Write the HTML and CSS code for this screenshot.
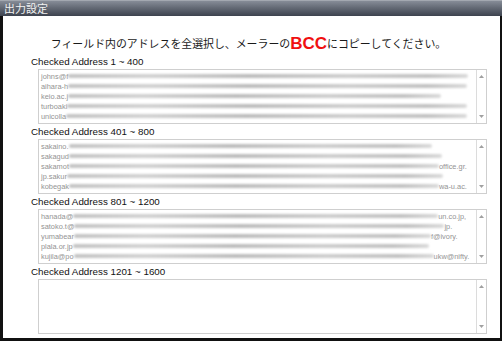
FILE: index.html
```html
<!DOCTYPE html>
<html lang="ja">
<head>
<meta charset="utf-8">
<title>出力設定</title>
<link rel="stylesheet" href="styles.css">
</head>
<body>
<div class="window">
  <div class="titlebar">出力設定</div>
  <div class="content">
    <p class="heading">フィールド内のアドレスを全選択し、メーラーの<span class="bcc">BCC</span>にコピーしてください。</p>

    <div class="block">
      <div class="label">Checked Address 1 ~ 400</div>
      <div class="box">
        <div class="lines">
          <div class="line"><span class="t">johns@f</span><span class="bar" style="width:400px"></span></div>
          <div class="line"><span class="t">aihara-h</span><span class="bar" style="width:399px"></span></div>
          <div class="line"><span class="t">keio.ac.j</span><span class="bar" style="width:373px"></span></div>
          <div class="line"><span class="t">turboaki</span><span class="bar" style="width:400px"></span></div>
          <div class="line"><span class="t">unicolla</span><span class="bar" style="width:401px"></span></div>
        </div>
        <div class="scroll">
          <svg class="arr" viewBox="0 0 5 3" width="5" height="3"><polygon points="0,3 2.5,0 5,3" fill="#a0a0a0"/></svg>
          <svg class="arr" viewBox="0 0 5 3" width="5" height="3"><polygon points="0,0 2.5,3 5,0" fill="#a0a0a0"/></svg>
        </div>
      </div>
    </div>

    <div class="block">
      <div class="label">Checked Address 401 ~ 800</div>
      <div class="box">
        <div class="lines">
          <div class="line"><span class="t">sakaino.</span><span class="bar" style="width:363px"></span></div>
          <div class="line"><span class="t">sakagud</span><span class="bar" style="width:373px"></span></div>
          <div class="line"><span class="t">sakamot</span><span class="bar" style="width:370px"></span><span class="t">office.gr.</span></div>
          <div class="line"><span class="t">jp.sakur</span><span class="bar" style="width:376px"></span></div>
          <div class="line"><span class="t">kobegak</span><span class="bar" style="width:370px"></span><span class="t">wa-u.ac.</span></div>
        </div>
        <div class="scroll">
          <svg class="arr" viewBox="0 0 5 3" width="5" height="3"><polygon points="0,3 2.5,0 5,3" fill="#a0a0a0"/></svg>
          <svg class="arr" viewBox="0 0 5 3" width="5" height="3"><polygon points="0,0 2.5,3 5,0" fill="#a0a0a0"/></svg>
        </div>
      </div>
    </div>

    <div class="block">
      <div class="label">Checked Address 801 ~ 1200</div>
      <div class="box">
        <div class="lines">
          <div class="line"><span class="t">hanada@</span><span class="bar" style="width:365px"></span><span class="t">un.co.jp,</span></div>
          <div class="line"><span class="t">satoko.t@</span><span class="bar" style="width:370px"></span><span class="t">jp.</span></div>
          <div class="line"><span class="t">yumabear</span><span class="bar" style="width:357px"></span><span class="t">f@ivory.</span></div>
          <div class="line"><span class="t">plala.or.jp</span><span class="bar" style="width:356px"></span></div>
          <div class="line"><span class="t">kujila@po</span><span class="bar" style="width:360px"></span><span class="t">ukw@nifty.</span></div>
        </div>
        <div class="scroll">
          <svg class="arr" viewBox="0 0 5 3" width="5" height="3"><polygon points="0,3 2.5,0 5,3" fill="#a0a0a0"/></svg>
          <svg class="arr" viewBox="0 0 5 3" width="5" height="3"><polygon points="0,0 2.5,3 5,0" fill="#a0a0a0"/></svg>
        </div>
      </div>
    </div>

    <div class="block">
      <div class="label">Checked Address 1201 ~ 1600</div>
      <div class="box">
        <div class="lines"></div>
        <div class="scroll">
          <svg class="arr" viewBox="0 0 5 3" width="5" height="3"><polygon points="0,3 2.5,0 5,3" fill="#a0a0a0"/></svg>
          <svg class="arr" viewBox="0 0 5 3" width="5" height="3"><polygon points="0,0 2.5,3 5,0" fill="#a0a0a0"/></svg>
        </div>
      </div>
    </div>
  </div>
</div>
</body>
</html>
```
FILE: styles.css
```css
* { box-sizing: border-box; }
html, body { margin: 0; padding: 0; background: #fff; }
body { width: 502px; height: 341px; overflow: hidden; }

.window {
  width: 502px;
  height: 341px;
  display: flex;
  flex-direction: column;
}

.titlebar {
  height: 16px;
  flex: none;
  background: linear-gradient(#868c97 0, #646a75 45%, #3d434f 100%);
  border-top: 1px solid #a3a8b0;
  color: #f2f2f2;
  font-family: "Noto Sans CJK JP", sans-serif;
  font-size: 11px;
  line-height: 14px;
  padding-left: 4px;
}

.content {
  flex: 1;
  border-left: 3px solid #111;
  border-right: 2px solid #111;
  border-bottom: 3px solid #111;
  padding: 17px 0 0 28px;
}

.heading {
  margin: 0 0 1px 0;
  padding-right: 34px;
  height: 21px;
  line-height: 21px;
  text-align: center;
  font-family: "Noto Sans CJK JP", sans-serif;
  font-size: 10.9px;
  color: #1a1a1a;
  white-space: nowrap;
}

.bcc {
  font-family: "Liberation Sans", Arial, sans-serif;
  font-weight: bold;
  font-size: 17px;
  color: #f01010;
  vertical-align: -1px;
}

.block {
  display: flex;
  flex-direction: column;
  margin-bottom: 1px;
}

.label {
  height: 14px;
  line-height: 13px;
  font-family: "Liberation Sans", Arial, sans-serif;
  font-size: 9.8px;
  color: #111;
}

.box {
  margin-left: 7px;
  width: 449px;
  height: 55px;
  border: 1px solid #cfcfcf;
  display: flex;
}

.lines {
  flex: 1;
  padding: 1px 0 0 2px;
  overflow: hidden;
}

.line {
  height: 10px;
  display: flex;
  align-items: center;
  white-space: nowrap;
  font-family: "Liberation Sans", Arial, sans-serif;
  font-size: 7.4px;
  color: #939393;
}

.t { flex: none; }

.bar {
  flex: none;
  height: 4px;
  background: linear-gradient(90deg, #c4c4c4, #d2d2d2 20%, #bdbdbd 45%, #cecece 70%, #c2c2c2 90%, #dadada);
  filter: blur(1px);
  border-radius: 2px;
}

.scroll {
  width: 10px;
  flex: none;
  border-left: 1px solid #dcdcdc;
  display: flex;
  flex-direction: column;
  justify-content: space-between;
  align-items: center;
  padding: 5px 0 5px 0;
}

.arr { display: block; }
```
